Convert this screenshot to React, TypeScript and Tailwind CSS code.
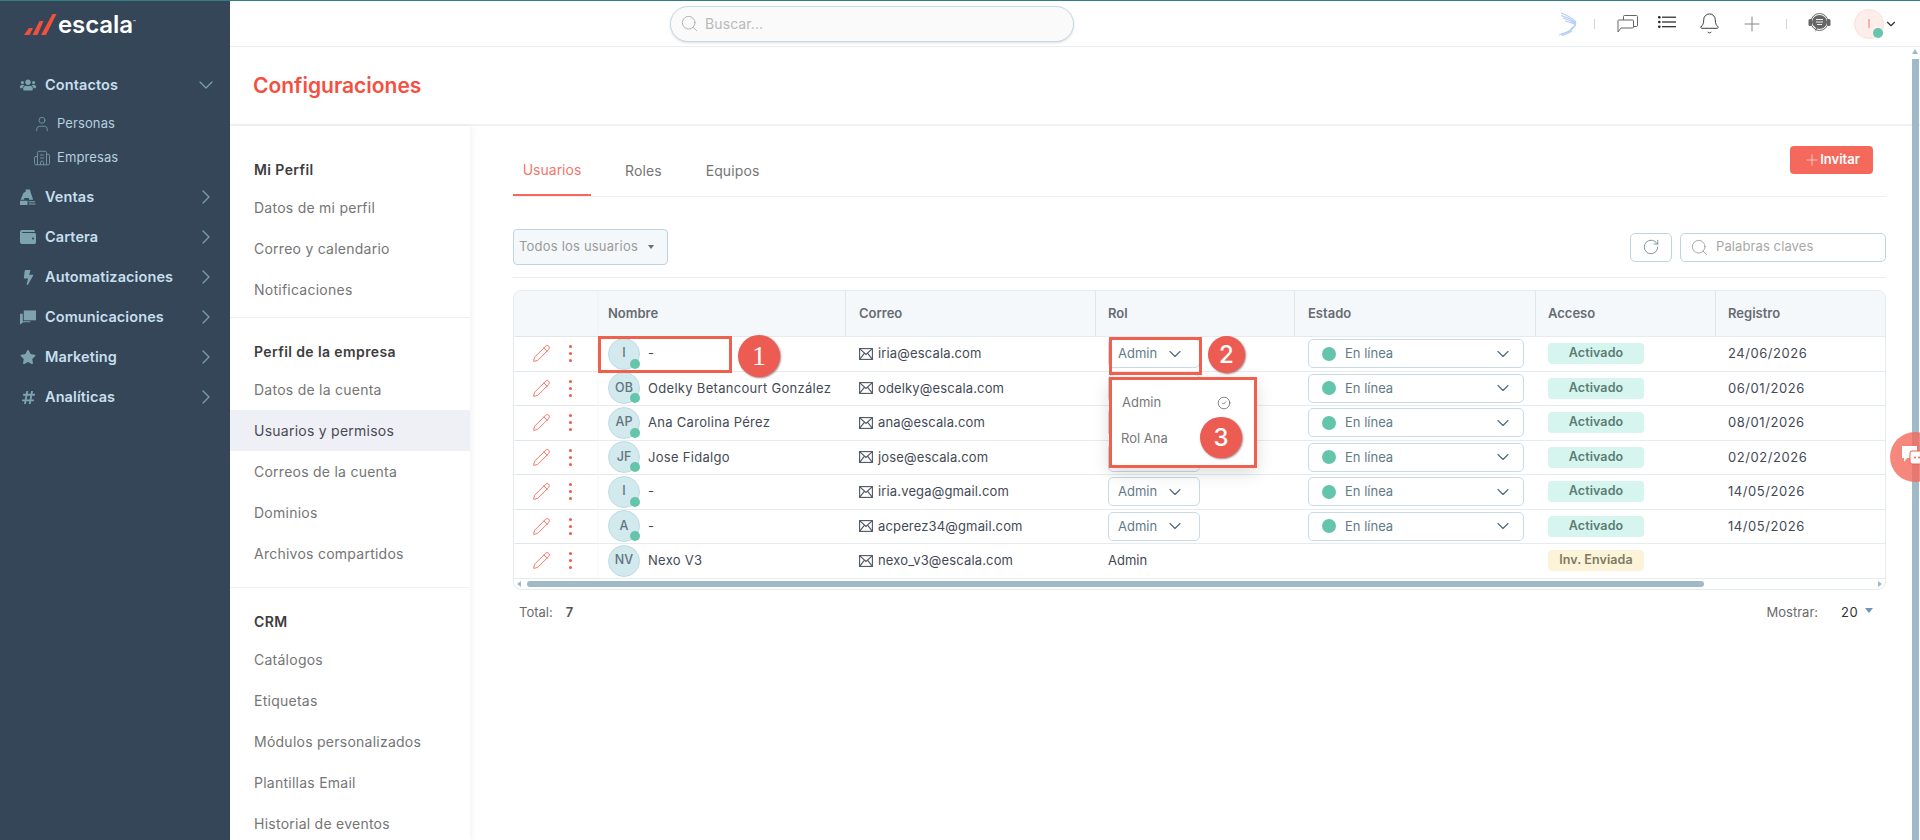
import React from "react";
import { ChevronDown, ChevronRight, User, Building2, Pencil, Search, RotateCw, Bell, Plus, CircleCheck } from "lucide-react";
import { FaUsers, FaWallet, FaBolt, FaStar, FaHashtag } from "react-icons/fa";

const font = "font-['Inter','Noto_Sans',sans-serif]";

function VentasIcon() {
  return (
    <svg width="17" height="17" viewBox="0 0 17 17" fill="#7da3ae">
      <path d="M6 0h4.5l.6 2.5L14 11H9.5V9h-5v2H.6L3.8 3.5 6 2.5z" />
      <path d="M0 12h8v4.5H0zM9 12.5h7v1H9zM9.5 15h7v1h-7z" />
    </svg>
  );
}

function CommsIcon() {
  return (
    <svg width="17" height="15" viewBox="0 0 17 15" fill="#7da3ae">
      <path d="M4 0h13v10.5H4z" />
      <path d="M0 3.5h3v8h8v1H3.5L0 15z" />
    </svg>
  );
}

const nav = [
  { label: "Ventas", icon: <VentasIcon /> },
  { label: "Cartera", icon: <FaWallet size={16} color="#7da3ae" /> },
  { label: "Automatizaciones", icon: <FaBolt size={15} color="#7da3ae" className="ml-[1px]" /> },
  { label: "Comunicaciones", icon: <CommsIcon /> },
  { label: "Marketing", icon: <FaStar size={16} color="#7da3ae" /> },
  { label: "Analíticas", icon: <FaHashtag size={15} color="#7da3ae" /> },
];

function Sidebar() {
  return (
    <aside className="w-[230px] shrink-0 bg-[#344658] flex flex-col">
      <div className="h-[46px] pl-6 flex items-center gap-px">
        <svg width="33" height="21" viewBox="0 0 33 21" fill="#f0503c">
          <path d="M0 21 L5 14 L9 14 L5.5 21 Z" />
          <path d="M8.5 21 L15.5 7 L19.5 7 L13.5 21 Z" />
          <path d="M17 21 L28.5 0 L32.5 0 L22 21 Z" />
        </svg>
        <span className="text-white text-[24px] font-semibold leading-none tracking-[-0.1px] mt-[2px]">escala</span>
        <span className="text-white text-[5px] self-start mt-[18px] -ml-[1px]">™</span>
      </div>
      <div className="pt-[18px]">
        <div className="h-10 pl-5 pr-3 flex items-center">
          <FaUsers size={16} color="#7da3ae" />
          <span className="ml-[9px] text-[14.5px] tracking-[0.1px] font-semibold text-[#c6dfec] flex-1">Contactos</span>
          <ChevronDown size={24} color="#7da3ae" strokeWidth={1.2} />
        </div>
        <div className="h-[34px] pl-[33px] flex items-center mt-[2px]">
          <User size={18} color="#6f929e" strokeWidth={1.3} />
          <span className="ml-[6px] text-[13px] tracking-[0.1px] text-[#b5d0de]">Personas</span>
        </div>
        <div className="h-[34px] pl-[33px] flex items-center mb-[2px]">
          <Building2 size={18} color="#6f929e" strokeWidth={1.3} />
          <span className="ml-[6px] text-[13px] tracking-[0.1px] text-[#b5d0de]">Empresas</span>
        </div>
        {nav.map((n) => (
          <div key={n.label} className="h-10 pl-5 pr-3 flex items-center">
            <span className="w-4 flex justify-center">{n.icon}</span>
            <span className="ml-[9px] text-[14.5px] tracking-[0.1px] font-semibold text-[#c6dfec] flex-1">{n.label}</span>
            <ChevronRight size={24} color="#7da3ae" strokeWidth={1.2} />
          </div>
        ))}
      </div>
    </aside>
  );
}

function Wing() {
  return (
    <svg width="20" height="24" viewBox="0 0 20 24" fill="none" stroke="#b4cdf6" strokeWidth="1.2">
      <path d="M3 1 C9 3 14 6 18 10" />
      <path d="M3 3.5 C9 5 14 8 18 11" />
      <path d="M5 6 C10 7.5 15 10 18 12" />
      <path d="M7 9 C11 10 15 11 18 13" />
      <path d="M18 13 C15 15 14 16 12 18" />
      <path d="M17 14 C14 18 10 21 1 23" />
      <path d="M15 16 C12 19 8 21 3 22" />
      <path d="M14 19 C11 21 8 22.5 4 23.5" />
    </svg>
  );
}

function ChatBubbles() {
  return (
    <svg width="21" height="18" viewBox="0 0 21 18" fill="none" stroke="#666" strokeWidth="1">
      <path d="M6.5 5V1.5a1 1 0 0 1 1-1h12a1 1 0 0 1 1 1v9a1 1 0 0 1-1 1H17" />
      <path d="M1.5 5h14a1 1 0 0 1 1 1v6a1 1 0 0 1-1 1H4l-3 4V5.5z" fill="#fff" />
    </svg>
  );
}

function ListIcon() {
  return (
    <svg width="18" height="12" viewBox="0 0 18 12" fill="#222">
      <circle cx="1.3" cy="1.3" r="1.3" />
      <circle cx="1.3" cy="6" r="1.3" />
      <circle cx="1.3" cy="10.7" r="1.3" />
      <rect x="4" y="0.6" width="14" height="1.2" />
      <rect x="4" y="5.4" width="14" height="1.2" />
      <rect x="4" y="10.1" width="14" height="1.2" />
    </svg>
  );
}

function Support() {
  return (
    <svg width="23" height="23" viewBox="0 0 23 23" fill="none">
      <circle cx="11.5" cy="10" r="8.5" stroke="#666" strokeWidth="1" />
      <rect x="0.5" y="7" width="3.5" height="7" rx="1.5" fill="#666" />
      <rect x="19" y="7" width="3.5" height="7" rx="1.5" fill="#666" />
      <path d="M4 10a7.5 7 0 0 1 15 0 7.5 7 0 0 1-10 6.5L7.5 20l.2-4.5A7 7 0 0 1 4 10z" fill="#666" />
      <path d="M8 7.5h7M8 10h7M9 12.5h5" stroke="#eee" strokeWidth="1" />
    </svg>
  );
}

function Topbar() {
  return (
    <header className="h-[46px] shrink-0 border-b border-[#e6edf2] flex items-center relative bg-white">
      <div className="ml-[440px] w-[404px] h-9 rounded-full border border-[#c4d8e8] bg-[#fafafa] shadow-sm flex items-center pl-[9px]">
        <Search size={19} color="#aaa" strokeWidth={1.1} />
        <span className="ml-[6px] text-[14px] tracking-[0.1px] text-[#b9b9b9]">Buscar...</span>
      </div>
      <div className="ml-[484px] flex items-center text-[#555]">
        <Wing />
        <span className="ml-[16px] w-px h-[10px] bg-[#c9d4e4]" />
        <span className="ml-[22px]"><ChatBubbles /></span>
        <span className="ml-[20px] mb-[4px]"><ListIcon /></span>
        <Bell size={23} strokeWidth={1} color="#333" className="ml-[21.5px] mb-[1px]" />
        <Plus size={24} strokeWidth={0.9} color="#777" className="ml-[19.5px]" />
        <span className="ml-[22px] w-px h-[10px] bg-[#c9d4e4]" />
        <span className="ml-[21px]"><Support /></span>
        <div className="ml-[23px] w-[30px] h-[30px] rounded-full bg-[#fdeeec] border border-[#fbdedb] flex items-center justify-center relative">
          <span className="text-[12px] text-[#f4897e]">I</span>
          <span className="absolute right-0 bottom-0 w-[10px] h-[10px] rounded-full bg-[#64c5ac]" />
        </div>
        <ChevronDown size={14} strokeWidth={2} color="#333" className="ml-0" />
      </div>
    </header>
  );
}

function SettingsNav() {
  const Item = ({ t, active }: { t: string; active?: boolean }) => (
    <div className={`h-[41px] pl-6 flex items-center text-[14px] tracking-[0.25px] ${active ? "bg-[#eef0f5] text-[#4a4a55]" : "text-[#757575]"}`}>{t}</div>
  );
  const Head = ({ t }: { t: string }) => (
    <div className="h-9 pl-6 flex items-center text-[14px] tracking-[0.4px] font-semibold text-[#3d3d3d]">{t}</div>
  );
  return (
    <nav className="w-[240px] shrink-0 bg-white shadow-[2px_0_6px_rgba(0,0,0,0.05)] overflow-hidden z-10">
      <div className="pt-[25px] pb-[7px] border-b border-[#eef0f3]">
        <Head t="Mi Perfil" />
        <Item t="Datos de mi perfil" />
        <Item t="Correo y calendario" />
        <Item t="Notificaciones" />
      </div>
      <div className="pt-[15px] pb-[13px] border-b border-[#eef0f3]">
        <Head t="Perfil de la empresa" />
        <Item t="Datos de la cuenta" />
        <Item t="Usuarios y permisos" active />
        <Item t="Correos de la cuenta" />
        <Item t="Dominios" />
        <Item t="Archivos compartidos" />
      </div>
      <div className="pt-[15px]">
        <Head t="CRM" />
        <Item t="Catálogos" />
        <Item t="Etiquetas" />
        <Item t="Módulos personalizados" />
        <Item t="Plantillas Email" />
        <Item t="Historial de eventos" />
      </div>
    </nav>
  );
}

function Envelope() {
  return (
    <svg width="14" height="12" viewBox="0 0 14 12" fill="none" stroke="#4d5563" strokeWidth="1.1">
      <rect x="0.6" y="0.6" width="12.8" height="10.8" />
      <path d="M0.6 0.6 L7 6.5 L13.4 0.6 M0.6 11.4 L5.5 5.2 M13.4 11.4 L8.5 5.2" />
    </svg>
  );
}

const cols = "grid grid-cols-[83px_249px_250px_199px_241px_180px_169px]";

const users = [
  { i: "I", n: "-", e: "iria@escala.com", d: "24/06/2026" },
  { i: "OB", n: "Odelky Betancourt González", e: "odelky@escala.com", d: "06/01/2026" },
  { i: "AP", n: "Ana Carolina Pérez", e: "ana@escala.com", d: "08/01/2026" },
  { i: "JF", n: "Jose Fidalgo", e: "jose@escala.com", d: "02/02/2026" },
  { i: "I", n: "-", e: "iria.vega@gmail.com", d: "14/05/2026" },
  { i: "A", n: "-", e: "acperez34@gmail.com", d: "14/05/2026" },
  { i: "NV", n: "Nexo V3", e: "nexo_v3@escala.com", d: "", invite: true },
];

function Row({ u }: { u: (typeof users)[number] }) {
  return (
    <div className={`${cols} h-[34.5px] border-b border-[#e5ebef] text-[13px] text-[#444a55] items-center`}>
      <div className="h-full flex items-center pl-[18px] shadow-[1px_0_2px_rgba(0,0,0,0.03)]">
        <Pencil size={19} strokeWidth={1.15} color="#ee6b5c" />
        <span className="ml-[18px] flex flex-col gap-[4px]">
          <i className="block w-[3px] h-[3px] rounded-full bg-[#f4594a]" />
          <i className="block w-[3px] h-[3px] rounded-full bg-[#f4594a]" />
          <i className="block w-[3px] h-[3px] rounded-full bg-[#f4594a]" />
        </span>
      </div>
      <div className="pl-[11px] flex items-center">
        <div className="w-[32px] h-[32px] rounded-full bg-[#d2e9ee] border border-[#bfdde4] flex items-center justify-center relative text-[12.5px] font-medium text-[#5f747d]">
          {u.i}
          {!u.invite && <span className="absolute right-[-1px] bottom-0 w-[10px] h-[10px] rounded-full bg-[#64c5ac]" />}
        </div>
        <span className="ml-2 whitespace-nowrap tracking-[0.3px]">{u.n}</span>
      </div>
      <div className="pl-[13px] flex items-center">
        <Envelope />
        <span className="ml-[5px] tracking-[0.15px]">{u.e}</span>
      </div>
      <div className="pl-3">
        {u.invite ? (
          "Admin"
        ) : (
          <div className="w-[92px] h-[29px] rounded-[5px] border border-[#c7dae6] bg-white flex items-center pl-[9px] text-[#627b88]">
            Admin
            <ChevronDown size={20} strokeWidth={1.4} color="#4f6b78" className="ml-[8px]" />
          </div>
        )}
      </div>
      <div className="pl-[13px]">
        {!u.invite && (
          <div className="w-[216px] h-[29px] rounded-[5px] border border-[#c7dae6] bg-white flex items-center pl-[13px] text-[#627b88] text-[13px]">
            <span className="w-[14px] h-[14px] rounded-full bg-[#64c5ac]" />
            <span className="ml-[9px] flex-1">En línea</span>
            <ChevronDown size={20} strokeWidth={1.4} color="#4f6b78" className="mr-[10px]" />
          </div>
        )}
      </div>
      <div className="pl-3">
        <div className={`w-[96px] h-[21px] rounded-[4px] flex items-center justify-center text-[12.5px] tracking-[0.1px] font-semibold ${u.invite ? "bg-[#fdf3d8] text-[#7d7a62]" : "bg-[#d6f5ee] text-[#5b7d74]"}`}>
          {u.invite ? "Inv. Enviada" : "Activado"}
        </div>
      </div>
      <div className="pl-3 tracking-[0.55px]">{u.d}</div>
    </div>
  );
}

function Table() {
  const heads = ["Nombre", "Correo", "Rol", "Estado", "Acceso", "Registro"];
  const pads = ["pl-[11px]", "pl-[13px]", "pl-3", "pl-[13px]", "pl-3", "pl-3"];
  return (
    <div className="mt-[12px] w-[1373px] rounded-lg border border-[#e3ebf0] overflow-hidden">
      <div className={`${cols} h-[46px] bg-[#f4f8fb] border-b border-[#e5ebef] text-[13px] font-semibold text-[#666c72]`}>
        <div className="shadow-[1px_0_2px_rgba(0,0,0,0.03)]" />
        {heads.map((h, i) => (
          <div key={h} className={`${pads[i]} flex items-center ${i < 5 ? "border-r border-[#dfe6ea]" : ""}`}>{h}</div>
        ))}
      </div>
      {users.map((u, i) => <Row key={i} u={u} />)}
      <div className="h-[10px] flex items-center relative">
        <span className="ml-[3px] w-0 h-0 border-y-[3px] border-y-transparent border-r-[4px] border-r-[#a0b9c6]" />
        <span className="ml-[6px] w-[1177px] h-[6px] rounded-full bg-[#a0b9c6]" />
        <span className="ml-auto mr-[3px] w-0 h-0 border-y-[3px] border-y-transparent border-l-[4px] border-l-[#a0b9c6]" />
      </div>
    </div>
  );
}

function Main() {
  return (
    <main className="flex-1 min-w-0 pl-[43px] overflow-hidden">
      <div className="w-[1373px] h-[71px] border-b border-[#eceff2] flex items-end justify-between relative">
        <div className="flex text-[14px] text-[#757575]">
          <div className="w-[78px] h-[47px] -mb-px border-b-2 border-[#f4695c] flex items-center justify-center pb-[5px] text-[#f2776c]">Usuarios</div>
          <div className="ml-[34px] h-[47px] flex items-center pb-[4px] tracking-[0.1px]">Roles</div>
          <div className="ml-[44px] h-[47px] flex items-center pb-[4px] tracking-[0.1px]">Equipos</div>
        </div>
        <div className="mb-[22px] mr-[13px] w-[83px] h-[28px] rounded-[4px] bg-[#f4695c] flex items-center justify-center text-white text-[13px] font-semibold">
          <Plus size={18} strokeWidth={1.1} color="#ffd9d4" className="-mr-[1px]" />
          <span>Invitar</span>
        </div>
      </div>
      <div className="w-[1373px] h-[81px] pt-[20px] border-b border-[#e8edf0] flex items-center justify-between">
        <div className="w-[155px] h-9 rounded-[4px] border border-[#c0d4e0] bg-[#f4f8fb] flex items-center pl-[5px] text-[13px] tracking-[0.2px] text-[#9a9a9a]">
          Todos los usuarios
          <span className="ml-[10px] w-0 h-0 border-x-[3.5px] border-x-transparent border-t-[4px] border-t-[#5f7480]" />
        </div>
        <div className="flex gap-2">
          <div className="w-[42px] h-[29px] rounded-[5px] border border-[#c0d4e0] flex items-center justify-center">
            <RotateCw size={18} strokeWidth={1} color="#5f7480" />
          </div>
          <div className="w-[206px] h-[29px] rounded-[5px] border border-[#c0d4e0] flex items-center pl-[9px] text-[13px] tracking-[0.1px] text-[#a8a8a8]">
            <Search size={19} strokeWidth={0.9} color="#888" />
            <span className="ml-[7px]">Palabras claves</span>
          </div>
        </div>
      </div>
      <Table />
      <div className="w-[1373px] mt-[13px] flex items-center justify-between text-[13px] text-[#6a6a6a] pl-[6px] pr-[13px]">
        <div>Total:<span className="ml-[13px] font-semibold text-[#555]">7</span></div>
        <div className="flex items-center">
          <span className="-ml-[3px]">Mostrar:</span>
          <span className="ml-[23px] text-[#333] tracking-[0.4px]">20</span>
          <span className="ml-[7px] mb-[3px] w-0 h-0 border-x-[4px] border-x-transparent border-t-[5px] border-t-[#6d96b4]" />
        </div>
      </div>
    </main>
  );
}

function Annotation({ n, cls, serif }: { n: string; cls: string; serif?: boolean }) {
  return (
    <div className={`absolute rounded-full bg-[#ec5c52] text-white flex items-center justify-center shadow-[1px_1px_2px_rgba(90,30,30,0.55)] ${serif ? "font-['Liberation_Serif',serif] text-[28px]" : "text-[24px] font-medium"} ${cls}`}>{n}</div>
  );
}

export default function App() {
  return (
    <div className={`relative w-[1920px] h-[840px] overflow-hidden flex bg-white border-t border-[#2f7f85] ${font}`}>
      <Sidebar />
      <div className="flex-1 min-w-0 flex flex-col">
        <Topbar />
        <div className="h-[79px] shrink-0 border-b-2 border-[#f0f2f4] flex items-center pl-[23px] text-[21px] font-semibold text-[#f4503f]">Configuraciones</div>
        <div className="flex-1 flex min-h-0">
          <SettingsNav />
          <Main />
          <div className="w-[8px] shrink-0" />
        </div>
      </div>

      {/* page scrollbar */}
      <div className="absolute left-[1912px] top-[58px] w-[7px] h-[782px] bg-[#a0b9c6]" />
      <span className="absolute left-[1912px] top-[48px] w-0 h-0 border-x-[3.5px] border-x-transparent border-b-[5px] border-b-[#a0b9c6]" />

      {/* role dropdown */}
      <div className="absolute left-[1109px] top-[376px] w-[148px] h-[90px] bg-white shadow-[0_6px_16px_rgba(0,0,0,0.14)] text-[13px] text-[#777]">
        <div className="h-[36px] mt-[8px] flex items-center pl-[13px] pr-[26px] justify-between">
          Admin
          <CircleCheck size={14} strokeWidth={1.2} color="#555" />
        </div>
        <div className="h-[36px] flex items-center pl-[12px]">Rol Ana</div>
      </div>

      {/* annotations */}
      <div className="absolute left-[598px] top-[335px] w-[134px] h-[37px] border-[3px] border-[#f0604f]" />
      <div className="absolute left-[1109px] top-[336px] w-[93px] h-[38px] border-[3px] border-[#f0604f]" />
      <div className="absolute left-[1109px] top-[376px] w-[148px] h-[91px] border-[3px] border-[#f0604f]" />
      <Annotation n="1" serif cls="left-[738px] top-[334px] w-[42px] h-[42px]" />
      <Annotation n="2" cls="left-[1208px] top-[335px] w-[37px] h-[37px]" />
      <Annotation n="3" cls="left-[1200px] top-[416px] w-[42px] h-[41px]" />

      {/* floating chat */}
      <div className="absolute left-[1890px] top-[431px] w-[50px] h-[50px] rounded-full bg-[#f4695c]/80">
        <svg width="30" height="30" viewBox="0 0 30 30" className="absolute left-[11px] top-[13px]">
          <path d="M1 1h15v12H6l-3 4v-4H1z" fill="#fff" />
          <rect x="9" y="6" width="20" height="13" rx="2" fill="#fff" stroke="#f0604f" />
          <circle cx="14" cy="12.5" r="1" fill="#f0604f" />
          <circle cx="18" cy="12.5" r="1" fill="#f0604f" />
        </svg>
      </div>
    </div>
  );
}
